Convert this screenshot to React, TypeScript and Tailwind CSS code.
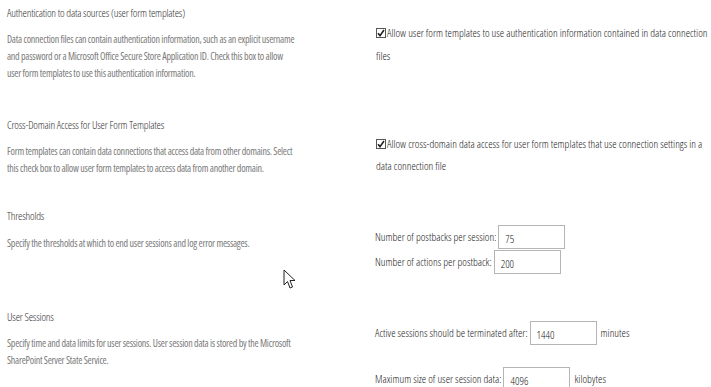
function Check() {
  return (
    <svg width="10" height="10" viewBox="0 0 10 10" className="inline-block align-[-1px] mr-[1px]">
      <rect x="0.5" y="0.5" width="9" height="9" fill="#fff" stroke="#555" />
      <path d="M2 5.2 L4 7.6 L8 2" fill="none" stroke="#222" strokeWidth="1.6" />
    </svg>
  );
}

function Box({ value }: { value: string }) {
  return (
    <div className="w-[67px] h-[24px] border border-[#b5b5b5] bg-white pl-[6px] pt-[5px] text-[11px] leading-[16px] font-light text-[#222]">
      {value}
    </div>
  );
}

function Heading({ children }: { children: React.ReactNode }) {
  return <div className="text-[11px] leading-[16px] font-light text-[#333] tracking-[-0.2px]">{children}</div>;
}

function Desc({ children, mt }: { children: React.ReactNode; mt: string }) {
  return <div className={`text-[10px] leading-[17px] text-[#7a7a7a] tracking-[-0.25px] ${mt}`}>{children}</div>;
}

export default function App() {
  return (
    <div className="relative w-[711px] h-[387px] overflow-hidden bg-white font-['Open_Sans',sans-serif] [font-stretch:75%]">
      {/* Section 1 */}
      <div className="flex h-[112px]">
        <div className="w-[369px] pl-[7px] pt-[5px]">
          <Heading>Authentication to data sources (user form templates)</Heading>
          <Desc mt="mt-[10px]">
            Data connection files can contain authentication information, such as an explicit username
            <br />
            and password or a Microsoft Office Secure Store Application ID. Check this box to allow
            <br />
            user form templates to use this authentication information.
          </Desc>
        </div>
        <div className="flex-1 pl-[7px] pt-[21px] text-[11px] leading-[23px] font-light text-[#222]">
          <span className="whitespace-nowrap">
            <Check />
            Allow user form templates to use authentication information contained in data connection
          </span>
          <br />
          files
        </div>
      </div>

      {/* Section 2 */}
      <div className="flex h-[90px]">
        <div className="w-[369px] pl-[7px] pt-[5px]">
          <Heading>Cross-Domain Access for User Form Templates</Heading>
          <Desc mt="mt-[10px]">
            Form templates can contain data connections that access data from other domains. Select
            <br />
            this check box to allow user form templates to access data from another domain.
          </Desc>
        </div>
        <div className="flex-1 pl-[7px] pt-[21px] text-[11px] leading-[22px] font-light text-[#222]">
          <span className="whitespace-nowrap">
            <Check />
            Allow cross-domain data access for user form templates that use connection settings in a
          </span>
          <br />
          data connection file
        </div>
      </div>

      {/* Section 3 */}
      <div className="flex h-[102px]">
        <div className="w-[369px] pl-[7px] pt-[6px]">
          <Heading>Thresholds</Heading>
          <Desc mt="mt-[11px]">Specify the thresholds at which to end user sessions and log error messages.</Desc>
        </div>
        <div className="flex-1 pl-[6px] pt-[23px] text-[11px] font-light text-[#222] flex flex-col gap-[1px]">
          <div className="flex items-center gap-[2px]">
            <span className="whitespace-nowrap">Number of postbacks per session:</span>
            <Box value="75" />
          </div>
          <div className="flex items-center gap-[2px]">
            <span className="whitespace-nowrap">Number of actions per postback:</span>
            <Box value="200" />
          </div>
        </div>
      </div>

      {/* Section 4 */}
      <div className="flex">
        <div className="w-[369px] pl-[7px] pt-[5px]">
          <Heading>User Sessions</Heading>
          <Desc mt="mt-[10px]">
            Specify time and data limits for user sessions. User session data is stored by the Microsoft
            <br />
            SharePoint Server State Service.
          </Desc>
        </div>
        <div className="flex-1 pl-[6px] pt-[17px] text-[11px] font-light text-[#222] flex flex-col gap-[22px]">
          <div className="flex items-center gap-[2px]">
            <span className="whitespace-nowrap">Active sessions should be terminated after:</span>
            <Box value="1440" />
            <span className="ml-[2px]">minutes</span>
          </div>
          <div className="flex items-center gap-[2px]">
            <span className="whitespace-nowrap">Maximum size of user session data:</span>
            <Box value="4096" />
            <span className="ml-[2px]">kilobytes</span>
          </div>
        </div>
      </div>

      {/* mouse cursor overlay */}
      <svg className="absolute left-[283px] top-[269px]" width="13" height="21" viewBox="0 0 13 21">
        <path d="M1 1 L1 16 L4.5 12.5 L7 19 L9.5 18 L7 11.5 L12 11.5 Z" fill="#fff" stroke="#222" strokeWidth="1" strokeLinejoin="round" />
      </svg>
    </div>
  );
}
